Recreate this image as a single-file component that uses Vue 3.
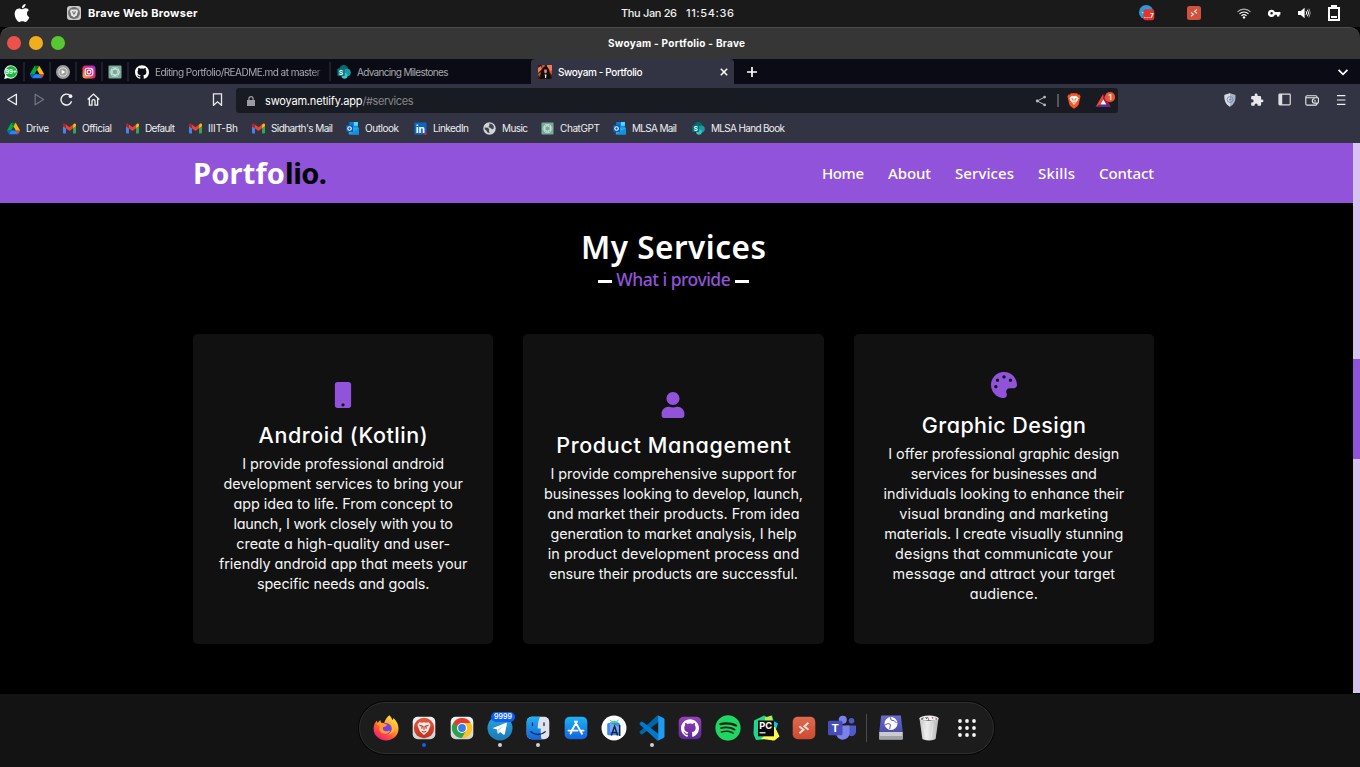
<script setup>
import { h } from 'vue'

// Spreads a label's letters so that it takes exactly the given width.
const vFit = {
  mounted(el, { value }) {
    const count = el.textContent.length
    const natural = el.getBoundingClientRect().width
    const spacing = (value - natural) / Math.max(count - 1, 1)
    el.style.letterSpacing = `${spacing}px`
    el.style.marginRight = `${-spacing}px`
  },
}

// Lettering that sits on top of an icon's artwork, in the icon's own units.
const lettering = {
  'tray-telegram': { box: 16, text: '...7', x: 9.8, y: 13.3, size: 6.5 },
  whatsapp: { box: 14, text: '99+', x: 7, y: 9.2, size: 5.8 },
  sharepoint: { box: 14, text: 'S', x: 4.1, y: 9.6, size: 6.8 },
  linkedin: { box: 14, text: 'in', x: 6.8, y: 11.4, size: 11 },
  bat: { box: 20, tall: 16, text: '1', x: 15, y: 7.9, size: 7.5 },
  'd-pycharm': { box: 28, text: 'PC', x: 13.8, y: 14.7, size: 9.3 },
  'd-teams': { box: 28, text: 'T', x: 7.2, y: 17.7, size: 11 },
}

const Icon = (props) => {
  const mark = lettering[props.name]
  if (!mark) return h('svg', null, [h('use', { href: `#${props.name}` })])
  return h('svg', { viewBox: `0 0 ${mark.box} ${mark.tall ?? mark.box}` }, [
    h('use', { href: `#${props.name}`, width: mark.box, height: mark.tall ?? mark.box }),
    h('text', {
      x: mark.x,
      y: mark.y,
      'font-size': mark.size,
      'font-weight': 700,
      'text-anchor': 'middle',
      fill: '#fff',
    }, mark.text),
  ])
}
Icon.props = ['name']

const pinned = ['whatsapp', 'drive', 'ytmusic', 'instagram', 'chatgpt']

const bookmarks = [
  { icon: 'drive', label: 'Drive', width: 23 },
  { icon: 'gmail', label: 'Official', width: 30 },
  { icon: 'gmail', label: 'Default', width: 30 },
  { icon: 'gmail', label: 'IIIT-Bh', width: 30 },
  { icon: 'gmail', label: "Sidharth's Mail", width: 62 },
  { icon: 'outlook', label: 'Outlook', width: 34 },
  { icon: 'linkedin', label: 'LinkedIn', width: 36 },
  { icon: 'globe', label: 'Music', width: 26 },
  { icon: 'chatgpt', label: 'ChatGPT', width: 40 },
  { icon: 'outlook', label: 'MLSA Mail', width: 45 },
  { icon: 'sharepoint', label: 'MLSA Hand Book', width: 74 },
]

const links = [
  { label: 'Home', width: 42 },
  { label: 'About', width: 43 },
  { label: 'Services', width: 59 },
  { label: 'Skills', width: 37 },
  { label: 'Contact', width: 55 },
]

const services = [
  {
    icon: 'mobile',
    title: 'Android (Kotlin)',
    width: 169,
    lines: [
      ['I provide professional android', 202],
      ['development services to bring your', 239.5],
      ['app idea to life. From concept to', 219.5],
      ['launch, I work closely with you to', 219.5],
      ['create a high-quality and user-', 214],
      ['friendly android app that meets your', 248.5],
      ['specific needs and goals.', 172.5],
    ],
  },
  {
    icon: 'user',
    title: 'Product Management',
    width: 234.5,
    lines: [
      ['I provide comprehensive support for', 246],
      ['businesses looking to develop, launch,', 259],
      ['and market their products. From idea', 252],
      ['generation to market analysis, I help', 246],
      ['in product development process and', 251.5],
      ['ensure their products are successful.', 249],
    ],
  },
  {
    icon: 'palette',
    title: 'Graphic Design',
    width: 164,
    lines: [
      ['I offer professional graphic design', 231],
      ['services for businesses and', 186],
      ['individuals looking to enhance their', 240.5],
      ['visual branding and marketing', 209],
      ['materials. I create visually stunning', 239],
      ['designs that communicate your', 217.5],
      ['message and attract your target', 222.5],
      ['audience.', 68],
    ],
  },
]

const dock = [
  { icon: 'firefox' },
  { icon: 'd-brave', dot: 'blue' },
  { icon: 'd-chrome' },
  { icon: 'd-telegram', dot: 'white', badge: '9999' },
  { icon: 'd-finder', dot: 'white' },
  { icon: 'd-store' },
  { icon: 'd-studio' },
  { icon: 'd-code', dot: 'white' },
  { icon: 'd-github' },
  { icon: 'd-spotify' },
  { icon: 'd-pycharm' },
  { icon: 'd-remote' },
  { icon: 'd-teams' },
]
const dockEnd = ['d-disk', 'd-trash', 'd-grid']
</script>

<template>
  <div class="desktop">
    <svg class="sprite" aria-hidden="true">
      <defs>
        <linearGradient id="g-insta" x1="0" y1="1" x2="1" y2="0"><stop offset="0" stop-color="#ffc93c" /><stop offset=".45" stop-color="#f5275e" /><stop offset="1" stop-color="#a02ce0" /></linearGradient>
        <linearGradient id="g-fox" x1=".9" y1="0" x2=".2" y2="1"><stop offset="0" stop-color="#fff44f" /><stop offset=".35" stop-color="#ffb02e" /><stop offset=".65" stop-color="#ff5a36" /><stop offset="1" stop-color="#f3127f" /></linearGradient>
        <linearGradient id="g-tile" x1="0" y1="0" x2="0" y2="1"><stop offset="0" stop-color="#f6f6f6" /><stop offset="1" stop-color="#cfcfcf" /></linearGradient>
        <linearGradient id="g-brave" x1="0" y1="0" x2="0" y2="1"><stop offset="0" stop-color="#e4583d" /><stop offset="1" stop-color="#bd3221" /></linearGradient>
        <linearGradient id="g-tele" x1="0" y1="0" x2="0" y2="1"><stop offset="0" stop-color="#2aa5e0" /><stop offset="1" stop-color="#1a79b4" /></linearGradient>
        <linearGradient id="g-blue" x1="0" y1="0" x2="0" y2="1"><stop offset="0" stop-color="#1fb2f5" /><stop offset="1" stop-color="#1563dd" /></linearGradient>
        <linearGradient id="g-purple" x1="0" y1="0" x2="0" y2="1"><stop offset="0" stop-color="#9a3fbd" /><stop offset="1" stop-color="#5b2a93" /></linearGradient>
        <linearGradient id="g-red" x1="0" y1="0" x2="0" y2="1"><stop offset="0" stop-color="#e0694f" /><stop offset="1" stop-color="#cc4a30" /></linearGradient>
        <linearGradient id="g-disk" x1="0" y1="0" x2="0" y2="1"><stop offset="0" stop-color="#6a6bd4" /><stop offset="1" stop-color="#4b4cab" /></linearGradient>
        <linearGradient id="g-bin" x1="0" y1="0" x2="1" y2="0"><stop offset="0" stop-color="#c4c4c4" /><stop offset=".4" stop-color="#ececec" /><stop offset="1" stop-color="#b4b4b4" /></linearGradient>
      </defs>
      <symbol id="apple" viewBox="0 0 24 24"><path fill="#fff" d="M12.152 6.896c-.948 0-2.415-1.078-3.96-1.04-2.04.027-3.91 1.183-4.961 3.014-2.117 3.675-.546 9.103 1.519 12.09 1.013 1.454 2.208 3.09 3.792 3.039 1.52-.065 2.09-.987 3.935-.987 1.831 0 2.35.987 3.96.948 1.637-.026 2.676-1.48 3.676-2.948 1.156-1.688 1.636-3.325 1.662-3.415-.039-.013-3.182-1.221-3.22-4.857-.026-3.04 2.48-4.494 2.597-4.559-1.429-2.09-3.623-2.324-4.39-2.376-2-.156-3.675 1.09-4.61 1.09zM15.53 3.83c.843-1.012 1.4-2.427 1.245-3.83-1.207.052-2.662.805-3.532 1.818-.78.896-1.454 2.338-1.273 3.714 1.338.104 2.715-.688 3.559-1.701" /></symbol>
      <symbol id="brave-grey" viewBox="0 0 14 14"><rect width="14" height="14" rx="3" fill="#c9c9c9" /><circle cx="7" cy="7" r="5.900" fill="#6d6d6d" /><path d="M3.800 3.600h6.400l.8 2-1.200 3.600L7 11.500 4.200 9.200 3 5.600z" fill="#e6e6e6" /><path d="M4.800 5.400h4.400L7 9.200z" fill="#6d6d6d" /><path d="M6.200 5.200h1.600L7 7.400z" fill="#e6e6e6" /></symbol>
      <symbol id="tray-telegram" viewBox="0 0 16 16"><circle cx="7.200" cy="7.200" r="7.200" fill="#2b9bd8" /><path d="M2.600 7.800l2.400-1v2z" fill="#fff" /><rect x="4.300" y="4.300" width="11" height="11" rx="2.400" fill="#e5332d" /></symbol>
      <symbol id="tray-remote" viewBox="0 0 14 14"><rect width="14" height="14" rx="2.500" fill="#cf533c" /><path d="M4 6.400l2.400 1.900L4 10.200M10 3.400L7.600 5.500 10 7.400" fill="none" stroke="#f3dcd6" stroke-width="1.200" /></symbol>
      <symbol id="wifi" viewBox="0 0 14 11"><g fill="none" stroke="#fff" stroke-width="1.100"><path d="M.5 3.800a9.200 9.200 0 0 1 13 0" opacity=".65" /><path d="M2.500 5.900a6.400 6.400 0 0 1 9 0" /><path d="M4.400 7.900a3.700 3.700 0 0 1 5.200 0" /></g><circle cx="7" cy="9.400" r="1.200" fill="#fff" /></symbol>
      <symbol id="key" viewBox="0 0 13 9"><path fill="#fff" fill-rule="evenodd" d="M3.600.8a3.600 3.600 0 0 1 3.300 2.300h5.500v2.600h-1v1.700H8.900V5.700h-2A3.600 3.600 0 1 1 3.600.8zm0 2.300a1.200 1.200 0 1 0 0 2.500 1.200 1.200 0 0 0 0-2.500z" /></symbol>
      <symbol id="sound" viewBox="0 0 13 12"><path fill="#fff" d="M0 4h2.800L6.600.8v10.400L2.800 8H0z" /><path fill="none" stroke="#fff" stroke-width="1" d="M8 4.200q1.400 1.800 0 3.600M9.400 2.700q2.400 3.300 0 6.600" /><path fill="none" stroke="#fff" stroke-width=".9" opacity=".6" d="M10.900 1.600q2.800 4.400 0 8.800" /></symbol>
      <symbol id="battery" viewBox="0 0 12 16"><path fill="#fff" fill-rule="evenodd" d="M3 0h6v2h3v14H0V2h3zM2 4v10h8V4zM3 11h6v2H3z" /></symbol>

      <symbol id="whatsapp" viewBox="0 0 14 14"><path d="M7 .2a6.700 6.700 0 1 1-3 12.800L.2 13.900l1-3.600A6.700 6.700 0 0 1 7 .2z" fill="#fff" /><circle cx="7.100" cy="6.900" r="5.900" fill="#12bd3c" /></symbol>
      <symbol id="drive" viewBox="0 0 87.3 78"><path fill="#0066da" d="m6.600 66.850 3.850 6.650c.8 1.400 1.950 2.500 3.300 3.300l13.750-23.800h-27.500c0 1.550.4 3.100 1.200 4.500z" /><path fill="#00ac47" d="m43.650 25-13.750-23.800c-1.350.8-2.500 1.900-3.300 3.300l-25.400 44a9.060 9.060 0 0 0 -1.200 4.500h27.500z" /><path fill="#ea4335" d="m73.550 76.800c1.350-.8 2.500-1.900 3.300-3.300l1.600-2.750 7.650-13.250c.8-1.400 1.200-2.950 1.200-4.500h-27.502l5.852 11.500z" /><path fill="#00832d" d="m43.650 25 13.750-23.800c-1.350-.8-2.900-1.200-4.500-1.200h-18.500c-1.600 0-3.150.45-4.500 1.200z" /><path fill="#2684fc" d="m59.800 53h-32.300l-13.750 23.800c1.350.8 2.900 1.200 4.500 1.200h50.800c1.600 0 3.150-.45 4.500-1.200z" /><path fill="#ffba00" d="m73.400 26.500-12.700-22c-.8-1.400-1.950-2.500-3.300-3.300l-13.750 23.800 16.150 28h27.450c0-1.550-.4-3.100-1.200-4.500z" /></symbol>
      <symbol id="ytmusic" viewBox="0 0 14 14"><circle cx="7" cy="7" r="7" fill="#9b9b9b" /><circle cx="7" cy="7" r="4.100" fill="none" stroke="#e4e4e4" stroke-width=".9" /><path d="M5.700 4.700L9.300 7 5.700 9.300z" fill="#fff" /></symbol>
      <symbol id="instagram" viewBox="0 0 14 14"><rect x=".5" y=".5" width="13" height="13" rx="3.200" fill="url(#g-insta)" /><rect x="3.200" y="3.200" width="7.600" height="7.600" rx="2.200" fill="none" stroke="#fff" stroke-width="1.100" /><circle cx="7" cy="7" r="1.900" fill="none" stroke="#fff" stroke-width="1.100" /><circle cx="9.300" cy="4.700" r=".6" fill="#fff" /></symbol>
      <symbol id="chatgpt" viewBox="0 0 14 14"><rect x=".5" y=".5" width="13" height="13" rx="1" fill="#75a99a" /><g fill="none" stroke="#dcebe6" stroke-width=".7"><ellipse cx="7" cy="7" rx="4.800" ry="2.700" /><ellipse cx="7" cy="7" rx="4.800" ry="2.700" transform="rotate(60 7 7)" /><ellipse cx="7" cy="7" rx="4.800" ry="2.700" transform="rotate(120 7 7)" /></g></symbol>
      <symbol id="github" viewBox="0 0 24 24"><path d="M12 .297c-6.630 0-12 5.373-12 12 0 5.303 3.438 9.800 8.205 11.385.6.113.82-.258.82-.577 0-.285-.01-1.040-.015-2.040-3.338.724-4.042-1.610-4.042-1.610C4.422 18.070 3.633 17.700 3.633 17.700c-1.087-.744.084-.729.084-.729 1.205.084 1.838 1.236 1.838 1.236 1.070 1.835 2.809 1.305 3.495.998.108-.776.417-1.305.76-1.605-2.665-.3-5.466-1.332-5.466-5.930 0-1.310.465-2.380 1.235-3.220-.135-.303-.54-1.523.105-3.176 0 0 1.005-.322 3.300 1.230.96-.267 1.980-.399 3-.405 1.020.006 2.040.138 3 .405 2.280-1.552 3.285-1.230 3.285-1.230.645 1.653.24 2.873.12 3.176.765.84 1.230 1.910 1.230 3.220 0 4.610-2.805 5.625-5.475 5.920.42.36.81 1.096.81 2.220 0 1.606-.015 2.896-.015 3.286 0 .315.21.69.825.57C20.565 22.092 24 17.592 24 12.297c0-6.627-5.373-12-12-12" fill="#fff" /></symbol>
      <symbol id="sharepoint" viewBox="0 0 14 14"><circle cx="6.800" cy="4.400" r="4.300" fill="#036c70" /><circle cx="10" cy="7.500" r="3.800" fill="#1a9ba1" /><circle cx="7.500" cy="10.700" r="3" fill="#37c6d0" /><rect x=".4" y="3.500" width="7.400" height="7.400" rx=".7" fill="#03787c" /></symbol>
      <symbol id="face" viewBox="0 0 14 14"><path fill="#3a1a12" d="M0 0h14v14H0z" /><path fill="#f07a55" d="M9 0h5v6l-2 2-1-4-2-2zM0 3l3-2 1 3-4 4z" /><path fill="#c4512f" d="M4 0h3L6 3 4 4zM11 7l3-2v5zM0 9l3-2v2L1 12z" /><path fill="#140d0c" d="M5 2.500l4-1 2 4 2 8.500H2l1-7z" /><path fill="#d9906c" d="M6.200 4.500h2.600v3l-1.300 1-1.300-1z" /><path fill="#fff" d="M6.700 9.500h1.800L8 13h-.8z" /></symbol>

      <symbol id="back" viewBox="0 0 12 12"><path d="M9.600 1.200v9.600L1.600 6z" fill="none" stroke="#f0f0f2" stroke-width="1.200" stroke-linejoin="round" /></symbol>
      <symbol id="forward" viewBox="0 0 12 12"><path d="M2 1.200v9.600L9.800 6z" fill="none" stroke="#747681" stroke-width="1.100" stroke-linejoin="round" /></symbol>
      <symbol id="reload" viewBox="0 0 12 12"><path d="M10.700 7.600A5 5 0 1 1 9 2.100" fill="none" stroke="#f0f0f2" stroke-width="1.300" /><circle cx="9.700" cy="2.900" r="1.700" fill="#f0f0f2" /></symbol>
      <symbol id="home" viewBox="0 0 12 12"><path d="M.6 6L6 1l5.400 5M2.200 5v6.200h2.400V7.600a1.400 1.400 0 0 1 2.800 0v3.600h2.400V5" fill="none" stroke="#f0f0f2" stroke-width="1.200" /></symbol>
      <symbol id="bookmark" viewBox="0 0 12 12"><path d="M2.300.8h7.400v10.600L6 8.200l-3.700 3.200z" fill="none" stroke="#e8e8ec" stroke-width="1.200" /></symbol>
      <symbol id="lock" viewBox="0 0 8 10"><path d="M0 4h8v6H0z" fill="#9a9ba3" /><path d="M1.900 4V2.700a2.100 2.100 0 0 1 4.200 0V4" fill="none" stroke="#9a9ba3" stroke-width="1.200" /></symbol>
      <symbol id="share" viewBox="0 0 12 12"><path d="M9.500 2.200L2.200 6l7.300 3.800" fill="none" stroke="#b9bac0" stroke-width="1" /><circle cx="9.600" cy="2.100" r="1.400" fill="#b9bac0" /><circle cx="2.200" cy="6" r="1.400" fill="#b9bac0" /><circle cx="9.600" cy="9.900" r="1.400" fill="#b9bac0" /></symbol>
      <symbol id="brave" viewBox="0 0 14 16"><path d="M4 .3h6l1.300 1.400 1.300-.1 1 2.200-.5 1.200-1.400 6.400-1.500 2L7 15.800l-3.200-2.400-1.500-2L.9 5 .4 3.800l1-2.200 1.300.1z" fill="#fb5420" /><path d="M5 2.800l2 .4 2-.4 2.600 2.200-.7 2-1.600 2.300L7 12 4.700 9.300 3.100 7l-.7-2z" fill="#fff" /><path d="M4.300 5.200l1.600.7-.5 1.600M9.700 5.200l-1.600.7.5 1.600M7 6.200v2.200M5.400 9.200L7 10l1.600-.8" fill="none" stroke="#fb5420" stroke-width=".8" /></symbol>
      <symbol id="bat" viewBox="0 0 20 16"><path d="M8.200 2L.6 15l4.600-2.500L8.200 7z" fill="#ff4724" /><path d="M.6 15h15.400l-4.400-2.500H5.200z" fill="#662d91" /><path d="M8.200 2L16 15l-4.400-2.500L8.200 7z" fill="#9e1f63" /><path d="M8.300 7.200l3.100 5.200H5.300z" fill="#fff" /><circle cx="15" cy="5.200" r="5.100" fill="#f5512b" /></symbol>
      <symbol id="shield" viewBox="0 0 12 14"><path d="M6 .3l5.500 1.800c.2 5-.6 9-5.500 11.600C1.100 11.100.3 7.100.5 2.100z" fill="#a9b2c6" /><path d="M6 .3v13.400C1.100 11.100.3 7.100.5 2.100z" fill="#d6dae6" /><circle cx="6" cy="6.500" r="2.900" fill="none" stroke="#7c89a8" stroke-width=".9" /><circle cx="6" cy="6.500" r="1.100" fill="#7c89a8" /></symbol>
      <symbol id="puzzle" viewBox="0 0 24 24"><path fill="#e8e8ec" d="M20.500 11H19V7c0-1.100-.9-2-2-2h-4V3.500a2.500 2.500 0 0 0-5 0V5H4c-1.100 0-2 .9-2 2v3.800h1.500a2.700 2.700 0 0 1 0 5.400H2V20c0 1.100.9 2 2 2h3.800v-1.500a2.700 2.700 0 0 1 5.400 0V22H17c1.100 0 2-.9 2-2v-4h1.500a2.500 2.500 0 0 0 0-5z" /></symbol>
      <symbol id="sidebar" viewBox="0 0 12 12"><rect x=".9" y="1.100" width="10.400" height="9.800" rx=".8" fill="none" stroke="#dedee3" stroke-width="1.100" /><path d="M.9 1h3v10h-3z" fill="#dedee3" /></symbol>
      <symbol id="wallet" viewBox="0 0 14 12"><path d="M12 3.700v-.6c0-.8-.5-1.300-1.300-1.300H2.200C1.300 1.800.8 2.300.8 3.100v6.600c0 .9.500 1.400 1.400 1.400h8.500c.8 0 1.300-.5 1.300-1.300v-.5M1 3.800h11.600c.5 0 .8.300.8.800v3.700c0 .5-.3.800-.8.800H9.500a2.200 2.200 0 0 1 0-4.400" fill="none" stroke="#e8e8ec" stroke-width="1.100" /><circle cx="10" cy="6.900" r=".8" fill="#e8e8ec" /></symbol>
      <symbol id="menu" viewBox="0 0 12 12"><path d="M2 1.600h8.400M2 6h8.400M2 10.400h8.400" stroke="#f0f0f2" stroke-width="1.200" /></symbol>
      <symbol id="close" viewBox="0 0 12 12"><path d="M2.800 2.800l6.400 6.400M9.200 2.800L2.800 9.200" stroke="#fff" stroke-width="1.500" /></symbol>
      <symbol id="plus" viewBox="0 0 12 12"><path d="M6 1v10M1 6h10" stroke="#fff" stroke-width="1.700" /></symbol>
      <symbol id="chevron" viewBox="0 0 12 12"><path d="M2.200 4.200L6 8l3.800-3.800" fill="none" stroke="#fff" stroke-width="1.500" /></symbol>

      <symbol id="gmail" viewBox="52 42 88 66"><path fill="#4285f4" d="M58 108h14V74L52 59v43c0 3.320 2.690 6 6 6" /><path fill="#34a853" d="M120 108h14c3.320 0 6-2.690 6-6V59l-20 15" /><path fill="#fbbc04" d="M120 48v26l20-15v-8c0-7.420-8.470-11.650-14.400-7.200" /><path fill="#ea4335" d="M72 74V48l24 18 24-18v26L96 92" /><path fill="#c5221f" d="M52 51v8l20 15V48l-5.600-4.200c-5.940-4.450-14.400-.22-14.400 7.200" /></symbol>
      <symbol id="outlook" viewBox="0 0 14 14"><path d="M3.800 0h9v7h-9z" fill="#1490df" /><path d="M8.300 0h4.500v4H8.300z" fill="#50d9ff" /><path d="M3.800 0h4.500v4H3.800z" fill="#0f78d4" /><path d="M3 6h11v7.400H3z" fill="#28a8ea" /><path d="M14 6.400L3.500 13.400H14z" fill="#1490df" /><rect x="0" y="3.200" width="7.600" height="7.600" rx=".7" fill="#0a5bb4" /><circle cx="3.800" cy="7" r="1.900" fill="none" stroke="#fff" stroke-width="1.200" /></symbol>
      <symbol id="linkedin" viewBox="0 0 14 14"><rect x=".5" y=".5" width="13" height="13" rx=".8" fill="#0a66c2" /><circle cx="12.200" cy="12.600" r="1.400" fill="#f01a24" /></symbol>
      <symbol id="globe" viewBox="0 0 14 14"><circle cx="7" cy="7" r="6.700" fill="#d3d4d8" /><path d="M1.700 6l3.600.2 1.600 2-.6 1.300 1 2.400-2.400-.5-1.400-2.300-1.600-1.200zM6.500 1.700l3.200.5 2 2.300-.3 2.700-1.600.5-2.300-1.600-1.800-.6 1.300-1.600z" fill="#42444f" /></symbol>

      <symbol id="mobile" viewBox="0 0 320 512"><path d="M272 0H48C21.500 0 0 21.500 0 48v416c0 26.500 21.500 48 48 48h224c26.500 0 48-21.500 48-48V48c0-26.500-21.500-48-48-48zM160 480c-17.700 0-32-14.300-32-32s14.300-32 32-32 32 14.300 32 32-14.300 32-32 32z" /></symbol>
      <symbol id="user" viewBox="0 0 448 512"><path d="M224 256c70.700 0 128-57.300 128-128S294.700 0 224 0 96 57.300 96 128s57.300 128 128 128zm89.600 32h-16.700c-22.200 10.200-46.900 16-72.900 16s-50.600-5.800-72.900-16h-16.700C60.200 288 0 348.200 0 422.400V464c0 26.500 21.500 48 48 48h352c26.500 0 48-21.500 48-48v-41.600c0-74.200-60.200-134.400-134.400-134.400z" /></symbol>
      <symbol id="palette" viewBox="0 0 512 512"><path d="M204.300 5C104.900 24.400 24.800 104.300 5.200 203.400c-37 187 131.700 326.400 258.800 306.700 41.200-6.400 61.400-54.600 42.500-91.700-23.100-45.400 9.900-98.400 60.900-98.400h79.700c35.800 0 64.800-29.600 64.900-65.300C511.500 97.100 368.100-26.900 204.300 5zM96 320c-17.700 0-32-14.300-32-32s14.300-32 32-32 32 14.300 32 32-14.300 32-32 32zm32-128c-17.700 0-32-14.300-32-32s14.300-32 32-32 32 14.300 32 32-14.300 32-32 32zm128-64c-17.700 0-32-14.300-32-32s14.300-32 32-32 32 14.300 32 32-14.300 32-32 32zm128 64c-17.700 0-32-14.300-32-32s14.300-32 32-32 32 14.300 32 32-14.300 32-32 32z" /></symbol>

      <symbol id="firefox" viewBox="0 0 28 28"><path d="M17.500 1.300c1.500 1.700 2.400 3 2.700 4.800 1-.6 1.200-1.200 1.300-2 3.300 3 5 6.800 5 10.700 0 6.800-5.600 11.700-12.400 11.700S1.600 21.500 1.600 14.800c0-3.600 1.300-6.400 3.200-8.400l.6 2.300L8.300 6l.9 2.800 2.900.3c1.500-4 3-6.500 5.400-7.800z" fill="url(#g-fox)" /><circle cx="14" cy="14.800" r="5.700" fill="#7a3fe0" /><path d="M4.500 9.500c3-1.300 5.500-1 8 .6l2.900.5-1.700 2-2.700.7c-.8 1.600.3 3.600 2.700 4 2 .3 3-.7 4.500-.4-1.300 2.900-5.600 4-8.600 1.900-2-1.400-2.700-4-2-6z" fill="#ff9a2e" /><path d="M19 9.500c2.500 4 1 9-3 10.800 5.500-.3 8-5 6.500-9.300z" fill="#ffb930" /></symbol>
      <symbol id="d-brave" viewBox="0 0 28 28"><rect x="2.700" y="2.700" width="22.600" height="22.600" rx="5" fill="url(#g-tile)" /><circle cx="14" cy="14" r="10.200" fill="url(#g-brave)" /><path d="M9.500 8.200l2.500.5 2-.5 2 .5 2.500-.5 2.100 2.600-.8 2.200-1.700 4.200-4.100 3.800-4.100-3.800-1.700-4.200-.8-2.200z" fill="#f6ece9" /><path d="M9.400 11.200l3 1-.8 2.600M18.600 11.200l-3 1 .8 2.600M14 12v3.800M11.800 17.200l2.200 1 2.200-1" fill="none" stroke="#c23b27" stroke-width="1.200" /></symbol>
      <symbol id="d-chrome" viewBox="0 0 28 28"><rect x="2.700" y="2.700" width="22.600" height="22.600" rx="5" fill="url(#g-tile)" /><path d="M14 14v10a10 10 0 0 0 8.700-15z" fill="#fcc31e" /><path d="M14 14L5.300 9A10 10 0 0 0 14 24z" fill="#2ba14b" /><path d="M5.300 9a10 10 0 0 1 17.400 0H14l-3 7.500z" fill="#e33b2e" /><path d="M5.300 9l4.300 7.500L14 14l-4-2z" fill="#2ba14b" /><path d="M18.300 16.500L14 24l-1-5z" fill="#fcc31e" /><path d="M14 24l4.300-7.500-7 2z" fill="#2ba14b" /><path d="M18.300 16.500L14 24a10 10 0 0 0 8.700-15H14z" fill="#fcc31e" /><circle cx="14" cy="14" r="5" fill="#fff" /><circle cx="14" cy="14" r="3.900" fill="#3b7de9" /></symbol>
      <symbol id="d-telegram" viewBox="0 0 28 28"><circle cx="14" cy="14" r="12.500" fill="url(#g-tele)" /><path d="M6.500 14.200L20 8.700c.8-.2 1.200.2 1 1l-2.200 10.200c-.2.8-.8 1-1.500.5l-3.200-2.400-1.600 1.600c-.3.3-.7.200-.8-.3l-.8-3.700-4.200-1.300c-.5-.3-.5-.8-.2-1z" fill="#fff" /><path d="M11.700 15.800l6-4.200-4.800 5.300-.5 2.400z" fill="#b9d5e5" /></symbol>
      <symbol id="d-finder" viewBox="0 0 28 28"><rect x="2.700" y="2.700" width="22.600" height="22.600" rx="5" fill="#dfe2ec" /><path d="M7.700 2.700H16c-1.500 3.500-2.200 7.200-2.300 11.800h3c-.1 4 .1 7.300.9 10.800H7.700a5 5 0 0 1-5-5V7.700a5 5 0 0 1 5-5z" fill="url(#g-blue)" /><path d="M8.500 8.800v2.700M20 8.800v2.700M6.800 17.700c4 3.700 10.400 3.700 14.400 0" fill="none" stroke="#1d2c46" stroke-width="1.300" stroke-linecap="round" /></symbol>
      <symbol id="d-store" viewBox="0 0 28 28"><rect x="2.700" y="2.700" width="22.600" height="22.600" rx="5" fill="url(#g-blue)" /><path d="M13 7.500l7 12.200M15 7.500L10 16M8.500 19.500l.8-1.300M6.500 16.600h9M18.500 16.600h3" stroke="#fff" stroke-width="1.900" stroke-linecap="round" /></symbol>
      <symbol id="d-studio" viewBox="0 0 28 28"><circle cx="14" cy="14" r="12.500" fill="#fff" /><path d="M9.500 9.500a5 4 0 0 1 9.500 0z" fill="#3ddc84" /><path d="M10.200 5.800l1.200 1.800M18.300 5.800l-1.200 1.800" stroke="#3ddc84" stroke-width="1" /><rect x="7.200" y="9" width="12.800" height="12.300" rx="1.500" fill="#4285f4" /><path d="M10 9v9h9v-5.500z" fill="#74a5f6" /><path d="M11.300 21.500l3.300-9.200 3 9.200M12.500 18.500h4.600M19.700 11v11" fill="none" stroke="#13263c" stroke-width="1.500" /></symbol>
      <symbol id="d-code" viewBox="-6 -6 112 112"><path fill="#0065a9" d="M96.460 10.800L75.860.88a6.230 6.230 0 0 0-7.100 1.200L1.300 63.600a4.170 4.170 0 0 0 0 6.160l5.510 5a4.170 4.170 0 0 0 5.320.24L93.360 13.400A4.130 4.130 0 0 1 100 16.700z" /><path fill="#007acc" d="M96.460 89.200L75.860 99.100a6.230 6.230 0 0 1-7.100-1.200L1.300 36.400a4.170 4.170 0 0 1 0-6.160l5.510-5a4.170 4.170 0 0 1 5.320-.24l81.230 61.600A4.130 4.130 0 0 0 100 83.300z" /><path fill="#1f9cf0" d="M75.860 99.130a6.230 6.230 0 0 1-7.100-1.210A3.660 3.660 0 0 0 75 95.330V4.670a3.660 3.660 0 0 0-6.250-2.590 6.230 6.230 0 0 1 7.100-1.210l20.600 9.910A6.250 6.250 0 0 1 100 16.400v67.200a6.250 6.250 0 0 1-3.540 5.630z" /></symbol>
      <symbol id="d-github" viewBox="0 0 28 28"><rect x="2.700" y="2.700" width="22.600" height="22.600" rx="5" fill="url(#g-purple)" /><use href="#github" x="5" y="5" width="18" height="18" /></symbol>
      <symbol id="d-spotify" viewBox="-1.300 -1.300 26.600 26.600"><circle cx="12" cy="12" r="11" fill="#14231a" /><path fill="#1ed760" d="M12 0C5.400 0 0 5.400 0 12s5.400 12 12 12 12-5.400 12-12S18.660 0 12 0zm5.521 17.340c-.24.359-.66.48-1.021.24-2.820-1.740-6.360-2.101-10.561-1.141-.418.122-.779-.179-.899-.539-.12-.421.18-.78.54-.9 4.560-1.021 8.520-.6 11.640 1.320.42.18.479.659.301 1.020zm1.440-3.300c-.301.42-.841.6-1.262.3-3.239-1.980-8.159-2.580-11.939-1.380-.479.12-1.020-.12-1.140-.6-.12-.48.12-1.021.6-1.141C9.600 9.900 15 10.561 18.720 12.840c.361.181.54.78.241 1.200zm.12-3.360C15.240 8.400 8.820 8.160 5.160 9.301c-.6.179-1.200-.181-1.380-.721-.18-.601.18-1.200.72-1.381 4.260-1.260 11.280-1.020 15.721 1.621.539.3.719 1.020.419 1.560-.299.421-1.020.599-1.559.3z" /></symbol>
      <symbol id="d-pycharm" viewBox="0 0 28 28"><path d="M20 6l6 3.500-2.500 7L18 11z" fill="#07c3f2" /><path d="M2 6.500L12 1.500l4 2 4-2 1.500 5-2 14-9 5-6.500.5L1.500 20z" fill="#21d789" /><path d="M13 3.500l6.500-2L22 14l4.500 8-5.500 4.500-9-2.500z" fill="#b6ec4f" /><path d="M16 15l7-2 4.500 9.500-5 4-13.500-1.500 3-3z" fill="#fcf84a" /><path d="M6 6.500h16v15.800H6z" fill="#0b0b0b" /><path d="M7.500 18.800h6" stroke="#fff" stroke-width="1.200" /></symbol>
      <symbol id="d-remote" viewBox="0 0 28 28"><rect x="2.700" y="2.700" width="22.600" height="22.600" rx="5" fill="url(#g-red)" /><path d="M9.400 12.300l4 3.500-4 3.500M18.400 8.700l-4 3.500 4 3.500" fill="none" stroke="#f6ddd7" stroke-width="2" /></symbol>
      <symbol id="d-teams" viewBox="0 0 28 28"><circle cx="23.500" cy="6.800" r="2.800" fill="#5059c9" /><path d="M18 11.500h10v6.500a4.300 4.300 0 0 1-7 3.200z" fill="#5059c9" /><circle cx="14.800" cy="5.700" r="4" fill="#7b83eb" /><path d="M8.500 11.500h13v8a6.800 6.800 0 0 1-13 2z" fill="#7b83eb" /><rect x="0" y="6.700" width="14.500" height="14.500" rx="1.300" fill="#454eb8" /></symbol>
      <symbol id="d-disk" viewBox="0 0 28 28"><path d="M4.200 1.500h19.600l2 16.500H2.200z" fill="url(#g-disk)" /><path d="M2.200 18h23.600v6.200c0 .8-.5 1.300-1.300 1.300h-21c-.8 0-1.300-.5-1.300-1.300z" fill="#c9cbcd" /><path d="M2.200 22h23.600v3.500H2.200z" fill="#9fa2a4" /><circle cx="14" cy="9.500" r="6.500" fill="#fff" /><path d="M7.800 11l3.200-1.500 2.500 1-.8 4.500M13.500 3.300l.5 2.700 3.200.7 2.500 2.500" fill="none" stroke="#5a5bc0" stroke-width="1" /></symbol>
      <symbol id="d-trash" viewBox="0 0 28 28"><path d="M4.500 4.500h19l-2.800 19.700c-.2 1.300-2.800 2.200-6.700 2.200s-6.500-.9-6.700-2.200z" fill="url(#g-bin)" /><ellipse cx="14" cy="4.500" rx="9.700" ry="2.900" fill="#efefef" /><ellipse cx="14" cy="4.900" rx="8.300" ry="2" fill="#6c6c6c" /><path d="M7.500 5.500l2.500-3 2.500 2 2-2.700 3 2.200 2-1 1.700 2.300-3 1.200-5-.5-3 .5z" fill="#f4f4f4" /><path d="M10.500 3.700l1.300 1M14 4.700l-1 .8" stroke="#333" stroke-width="1" /><path d="M17 3.700l1.300 1" stroke="#c33a2c" stroke-width="1" /><path d="M8 10l3 13M18 10l-2 14" stroke="#f8f8f8" stroke-width="1.200" opacity=".4" /></symbol>
      <symbol id="d-grid" viewBox="0 0 28 28"><g fill="#f4f4f4"><circle cx="7" cy="7" r="1.900" /><circle cx="14" cy="7" r="1.900" /><circle cx="21" cy="7" r="1.900" /><circle cx="7" cy="14" r="1.900" /><circle cx="14" cy="14" r="1.900" /><circle cx="21" cy="14" r="1.900" /><circle cx="7" cy="21" r="1.900" /><circle cx="14" cy="21" r="1.900" /><circle cx="21" cy="21" r="1.900" /></g></symbol>
    </svg>

    <div class="menubar">
      <div class="menubar-app">
        <Icon class="apple" name="apple" />
        <Icon class="app-icon" name="brave-grey" />
        <span v-fit="109.500" class="text app-name">Brave Web Browser</span>
      </div>
      <div class="clock"><span v-fit="56" class="text">Thu Jan 26</span><span v-fit="48" class="text">11:54:36</span></div>
      <div class="tray">
        <Icon class="t-tele" name="tray-telegram" />
        <Icon class="t-remote" name="tray-remote" />
        <Icon class="t-wifi" name="wifi" />
        <Icon class="t-key" name="key" />
        <Icon class="t-sound" name="sound" />
        <Icon class="t-battery" name="battery" />
      </div>
    </div>

    <div class="window">
      <div class="titlebar">
        <div class="lights"><i class="red"></i><i class="amber"></i><i class="green"></i></div>
        <span v-fit="137" class="text">Swoyam - Portfolio - Brave</span>
      </div>

      <div class="tabstrip">
        <div v-for="name in pinned" :key="name" class="pin"><Icon class="i14" :name="name" /></div>
        <div class="tab tab-github"><Icon class="i14" name="github" /><div class="fade"><span v-fit="165.500" class="text">Editing Portfolio/README.md at master</span></div></div>
        <div class="tab tab-miles"><Icon class="i14" name="sharepoint" /><span v-fit="91.500" class="text">Advancing Milestones</span></div>
        <div class="tab tab-active"><Icon class="i14" name="face" /><span v-fit="84.500" class="text">Swoyam - Portfolio</span><Icon class="i12 close" name="close" /></div>
        <Icon class="i12 plus" name="plus" />
        <Icon class="i14 chevron" name="chevron" />
      </div>

      <div class="toolbar">
        <div class="nav-icons">
          <Icon class="i13" name="back" />
          <Icon class="i13" name="forward" />
          <Icon class="i13" name="reload" />
          <Icon class="i13" name="home" />
        </div>
        <Icon class="i13" name="bookmark" />
        <div class="address">
          <Icon class="lock" name="lock" />
          <span v-fit="97.500" class="text host">swoyam.netlify.app</span><span v-fit="51" class="text path">/#services</span>
          <Icon class="i12 share" name="share" />
          <i class="bar"></i>
          <Icon class="brave" name="brave" />
          <Icon class="bat" name="bat" />
        </div>
        <div class="extensions">
          <Icon class="shield" name="shield" />
          <Icon class="i14" name="puzzle" />
          <Icon class="i13" name="sidebar" />
          <Icon class="i14 wallet" name="wallet" />
          <Icon class="i12" name="menu" />
        </div>
      </div>

      <div class="bookmarks">
        <div v-for="mark in bookmarks" :key="mark.label" class="mark">
          <Icon class="i13" :name="mark.icon" />
          <span v-fit="mark.width" class="text">{{ mark.label }}</span>
        </div>
      </div>

      <div class="viewport">
        <div class="page">
          <header class="site-header">
            <div class="logo"><span v-fit="92" class="text">Portfo</span><span v-fit="42" class="text dark">lio.</span></div>
            <nav class="site-nav">
              <a v-for="link in links" :key="link.label" v-fit="link.width" class="text">{{ link.label }}</a>
            </nav>
          </header>
          <main class="services">
            <h2><span v-fit="185" class="text">My Services</span></h2>
            <div class="subtitle"><i></i><span v-fit="114.500" class="text">What i provide</span><i></i></div>
            <div class="cards">
              <article v-for="service in services" :key="service.title" class="card">
                <Icon class="card-icon" :name="service.icon" />
                <h3><span v-fit="service.width" class="text">{{ service.title }}</span></h3>
                <p><span v-for="line in service.lines" :key="line[0]" v-fit="line[1]" class="text">{{ line[0] }}</span></p>
              </article>
            </div>
          </main>
        </div>
        <div class="scrollbar"><div class="thumb"></div></div>
      </div>
    </div>

    <div class="dock-area">
      <div class="dock">
        <div v-for="app in dock" :key="app.icon" class="dock-item">
          <Icon class="dock-icon" :name="app.icon" />
          <b v-if="app.badge">{{ app.badge }}</b>
          <i v-if="app.dot" :class="app.dot"></i>
        </div>
        <div class="dock-line"></div>
        <div v-for="name in dockEnd" :key="name" class="dock-item"><Icon class="dock-icon" :name="name" /></div>
      </div>
    </div>
  </div>
</template>

<style>
body {
  margin: 0;
  background: #000;
  overflow: hidden;
}
</style>

<style scoped>
.desktop {
  display: flex;
  flex-direction: column;
  width: 1360px;
  height: 767px;
  overflow: hidden;
  background: #000;
  color: #fff;
  font-family: Inter, "Liberation Sans", sans-serif;
}
.sprite { position: absolute; width: 0; height: 0; }
.text { display: inline-block; white-space: pre; flex: none; }
svg { flex: none; display: block; }
.i12 { width: 12px; height: 12px; }
.i13 { width: 13px; height: 13px; }
.i14 { width: 14px; height: 14px; }

.menubar {
  box-sizing: border-box;
  display: flex;
  align-items: center;
  height: 27px;
  padding-bottom: 1px;
  background: #1a1a1a;
  font-size: 11px;
}
.menubar-app { display: flex; align-items: center; width: 621px; }
.apple { width: 18px; height: 18px; margin-left: 13px; }
.app-icon { width: 14px; height: 14px; margin-left: 36px; margin-right: 7px; }
.app-name { font-weight: 700; }
.clock { display: flex; gap: 9px; font-weight: 500; color: #f0f0f0; }
.tray { display: flex; align-items: center; margin-left: auto; margin-right: 20px; }
.t-tele { width: 16px; height: 16px; }
.t-remote { width: 14px; height: 14px; margin-left: 32px; }
.t-wifi { width: 14px; height: 11px; margin-left: 36px; }
.t-key { width: 13px; height: 9px; margin-left: 17px; }
.t-sound { width: 13px; height: 12px; margin-left: 17px; }
.t-battery { width: 12px; height: 16px; margin-left: 17px; }

.window { display: flex; flex-direction: column; height: 667px; }
.titlebar {
  box-sizing: border-box;
  display: flex;
  align-items: center;
  height: 32px;
  padding-bottom: 2px;
  border-top: 1px solid #4c4c4c;
  border-radius: 10px 10px 0 0;
  background: #363636;
  font-size: 10px;
  font-weight: 700;
}
.lights { display: flex; gap: 8px; width: 601px; padding-left: 7px; }
.lights i { width: 14px; height: 14px; border-radius: 50%; }
.red { background: #ec5249; }
.amber { background: #f0ad1d; }
.green { background: #57c831; }

.tabstrip { display: flex; align-items: center; height: 25px; background: #0b0b15; font-size: 10px; }
.pin {
  box-sizing: border-box;
  display: flex;
  align-items: center;
  width: 26px;
  height: 19px;
  padding-left: 5px;
  border-right: 2px solid #1e1f28;
}
.pin:first-child { width: 25px; padding-left: 4px; }
.tab { box-sizing: border-box; display: flex; align-items: center; gap: 6px; color: #a7a8ad; }
.tab-github { width: 202px; height: 19px; padding-left: 6px; border-right: 2px solid #1e1f28; }
.fade { width: 169px; overflow: hidden; mask-image: linear-gradient(90deg, #000 92%, rgba(0, 0, 0, 0.3)); }
.tab-miles { width: 200px; padding-left: 6px; }
.tab-active { width: 203px; height: 25px; padding: 0 4px 0 7px; border-radius: 4px 4px 0 0; background: #323443; color: #fff; font-weight: 500; }
.close { margin-left: auto; }
.plus { margin-left: 12px; }
.chevron { margin-left: auto; margin-right: 10px; }

.toolbar { display: flex; align-items: center; height: 31px; background: #323443; }
.nav-icons { display: flex; gap: 14px; width: 205px; padding-left: 6px; }
.address {
  box-sizing: border-box;
  display: flex;
  align-items: center;
  width: 882px;
  height: 25px;
  margin-left: 12px;
  margin-top: 2px;
  padding-left: 11px;
  border-radius: 3px;
  background: #191b22;
  font-size: 11px;
}
.lock { width: 8px; height: 10px; margin-right: 10px; }
.path { color: #85868c; }
.share { margin-left: auto; }
.bar { width: 2px; height: 13px; margin-left: 10px; background: #55575f; }
.brave { width: 14px; height: 16px; margin-left: 8px; }
.bat { width: 20px; height: 16px; margin: 0 3px 2px 14px; }
.extensions { display: flex; align-items: center; gap: 14px; margin-left: 106px; }
.shield { width: 12px; height: 14px; }
.wallet { margin-right: 2px; }

.bookmarks {
  box-sizing: border-box;
  display: grid;
  grid-template-columns: 56px 63px 63px 63px 94px 68px 69px 58px 72px 79px 100px;
  align-items: center;
  height: 28px;
  padding-left: 7px;
  padding-bottom: 2px;
  background: #323443;
  color: #eeeef0;
  font-size: 10px;
}
.mark { display: flex; align-items: center; gap: 6px; }

.viewport { display: flex; height: 551px; }
.page { width: 1353px; background: #000; }
.site-header {
  box-sizing: border-box;
  display: flex;
  align-items: center;
  justify-content: space-between;
  height: 60px;
  padding: 0 199px 0 193px;
  background: #9053da;
  font-family: "Noto Sans", "Open Sans", sans-serif;
}
.logo { font-size: 29px; font-weight: 700; line-height: 60px; }
.dark { color: #000; }
.site-nav { display: flex; gap: 24px; font-size: 15px; font-weight: 500; line-height: 60px; }
.services { width: 961px; margin-left: 193px; padding-top: 24px; }
h2, h3, p { margin: 0; }
h2 {
  text-align: center;
  height: 39px;
  font: 600 31.5px/39px "Noto Sans", "Open Sans", sans-serif;
}
.subtitle {
  display: flex;
  align-items: center;
  justify-content: center;
  gap: 4px;
  height: 26px;
  color: #9053da;
  font: 500 17.500px/26px "Noto Sans", "Open Sans", sans-serif;
}
.subtitle i { width: 14.5px; height: 3px; margin-top: 4px; background: #fff; }
.cards { display: grid; grid-template-columns: repeat(3, 1fr); gap: 30px; margin-top: 42px; }
.card {
  box-sizing: border-box;
  display: flex;
  flex-direction: column;
  align-items: center;
  justify-content: center;
  height: 310px;
  padding-bottom: 2px;
  border-radius: 5px;
  background: #111;
  font-feature-settings: "cv11";
}
.card-icon { width: 26px; height: 26px; fill: #9053da; }
h3 { margin-top: 12px; font-size: 21.500px; font-weight: 500; line-height: 30px; }
p { display: flex; flex-direction: column; align-items: center; margin-top: 4px; font-size: 14.4px; line-height: 20px; color: #f4f4f4; }
.scrollbar { width: 7px; height: 550px; background: #d8c3f0; }
.thumb { height: 100px; margin-top: 216px; background: #9053da; }

.dock-area { display: flex; justify-content: center; flex: 1; padding-top: 8px; padding-right: 7px; background: #131313; }
.dock {
  box-sizing: border-box;
  display: flex;
  align-items: center;
  width: 635px;
  height: 52px;
  padding-left: 7px;
  border: 1px solid #303030;
  border-radius: 26px;
  background: #1c1c1c;
  box-shadow: 0 0 0 1px #050505;
}
.dock-item { position: relative; display: flex; justify-content: center; width: 38px; }
.dock-icon { width: 28px; height: 28px; }
.dock-item i { position: absolute; top: 29px; left: 17px; width: 4px; height: 4px; border-radius: 50%; }
.dock-item .blue { background: #0a60f0; }
.dock-item .white { background: #d0d0d0; }
.dock-item b {
  position: absolute;
  top: -2px;
  left: 10px;
  width: 24px;
  height: 10px;
  border-radius: 5px;
  background: #0c5df2;
  font-size: 7px;
  font-weight: 600;
  line-height: 10px;
  text-align: center;
}
.dock-line { width: 1px; height: 28px; margin: 0 5px; background: #4a4a4a; }
</style>
